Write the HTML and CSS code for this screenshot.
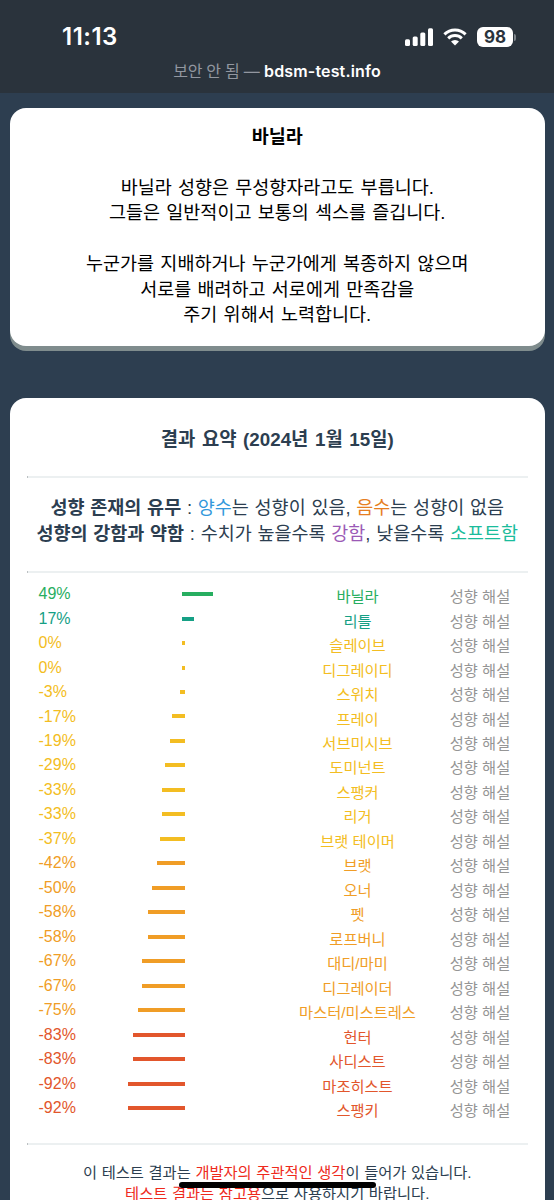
FILE: index.html
```html
<!DOCTYPE html>
<html lang="ko">
<head>
<meta charset="utf-8">
<title>결과 요약</title>
<link rel="stylesheet" href="styles.css">
</head>
<body>
<header class="top">
  <div class="status">
    <span class="clock">11:13</span>
    <div class="icons">
      <svg class="signal" width="28" height="18" viewBox="0 0 28 18"><rect x="0" y="11.3" width="5" height="6.7" rx="1.5"/><rect x="7.7" y="8.4" width="5" height="9.6" rx="1.5"/><rect x="15.3" y="4.5" width="5" height="13.5" rx="1.5"/><rect x="23" y="0.3" width="5" height="17.7" rx="1.5"/></svg>
      <svg class="wifi" width="24" height="18" viewBox="0 0 24 18"><path d="M1.4 6.4A15.2 15.2 0 0 1 22.6 6.4M5.2 10.3A9.8 9.8 0 0 1 18.8 10.3"/><path class="dot" d="M12 17.6L8 13.5A5.8 5.8 0 0 1 16 13.5Z"/></svg>
      <span class="battery">98</span><i class="cap"></i>
    </div>
  </div>
  <div class="url"><span class="insecure">보안 안 됨 —</span> <b>bdsm-test.info</b></div>
</header>
<main>
  <section class="card intro">
    <h2>바닐라</h2>
    <p>바닐라 성향은 무성향자라고도 부릅니다.<br>그들은 일반적이고 보통의 섹스를 즐깁니다.</p>
    <p>누군가를 지배하거나 누군가에게 복종하지 않으며<br>서로를 배려하고 서로에게 만족감을<br>주기 위해서 노력합니다.</p>
  </section>
  <section class="card result">
    <h2>결과 요약 (2024년 1월 15일)</h2>
    <hr>
    <p class="legend"><b>성향 존재의 유무</b> : <span class="blue">양수</span>는 성향이 있음, <span class="pumpkin">음수</span>는 성향이 없음<br><b>성향의 강함과 약함</b> : 수치가 높을수록 <span class="purple">강함</span>, 낮을수록 <span class="teal">소프트함</span></p>
    <hr>
    <ul class="scores">
      <li class="green"><span class="pct">49%</span><span class="track pos"><i style="--v:49"></i></span><span class="name">바닐라</span><span class="more">성향 해설</span></li>
      <li class="sea"><span class="pct">17%</span><span class="track pos"><i style="--v:17"></i></span><span class="name">리틀</span><span class="more">성향 해설</span></li>
      <li class="yellow"><span class="pct">0%</span><span class="track"><i style="--v:0"></i></span><span class="name">슬레이브</span><span class="more">성향 해설</span></li>
      <li class="yellow"><span class="pct">0%</span><span class="track"><i style="--v:0"></i></span><span class="name">디그레이디</span><span class="more">성향 해설</span></li>
      <li class="yellow"><span class="pct">-3%</span><span class="track"><i style="--v:3"></i></span><span class="name">스위치</span><span class="more">성향 해설</span></li>
      <li class="yellow"><span class="pct">-17%</span><span class="track"><i style="--v:17"></i></span><span class="name">프레이</span><span class="more">성향 해설</span></li>
      <li class="yellow"><span class="pct">-19%</span><span class="track"><i style="--v:19"></i></span><span class="name">서브미시브</span><span class="more">성향 해설</span></li>
      <li class="yellow"><span class="pct">-29%</span><span class="track"><i style="--v:29"></i></span><span class="name">도미넌트</span><span class="more">성향 해설</span></li>
      <li class="yellow"><span class="pct">-33%</span><span class="track"><i style="--v:33"></i></span><span class="name">스팽커</span><span class="more">성향 해설</span></li>
      <li class="yellow"><span class="pct">-33%</span><span class="track"><i style="--v:33"></i></span><span class="name">리거</span><span class="more">성향 해설</span></li>
      <li class="yellow"><span class="pct">-37%</span><span class="track"><i style="--v:37"></i></span><span class="name">브랫 테이머</span><span class="more">성향 해설</span></li>
      <li class="orange"><span class="pct">-42%</span><span class="track"><i style="--v:42"></i></span><span class="name">브랫</span><span class="more">성향 해설</span></li>
      <li class="orange"><span class="pct">-50%</span><span class="track"><i style="--v:50"></i></span><span class="name">오너</span><span class="more">성향 해설</span></li>
      <li class="orange"><span class="pct">-58%</span><span class="track"><i style="--v:58"></i></span><span class="name">펫</span><span class="more">성향 해설</span></li>
      <li class="orange"><span class="pct">-58%</span><span class="track"><i style="--v:58"></i></span><span class="name">로프버니</span><span class="more">성향 해설</span></li>
      <li class="orange"><span class="pct">-67%</span><span class="track"><i style="--v:67"></i></span><span class="name">대디/마미</span><span class="more">성향 해설</span></li>
      <li class="orange"><span class="pct">-67%</span><span class="track"><i style="--v:67"></i></span><span class="name">디그레이더</span><span class="more">성향 해설</span></li>
      <li class="orange"><span class="pct">-75%</span><span class="track"><i style="--v:75"></i></span><span class="name">마스터/미스트레스</span><span class="more">성향 해설</span></li>
      <li class="red"><span class="pct">-83%</span><span class="track"><i style="--v:83"></i></span><span class="name">헌터</span><span class="more">성향 해설</span></li>
      <li class="red"><span class="pct">-83%</span><span class="track"><i style="--v:83"></i></span><span class="name">사디스트</span><span class="more">성향 해설</span></li>
      <li class="red"><span class="pct">-92%</span><span class="track"><i style="--v:92"></i></span><span class="name">마조히스트</span><span class="more">성향 해설</span></li>
      <li class="red"><span class="pct">-92%</span><span class="track"><i style="--v:92"></i></span><span class="name">스팽키</span><span class="more">성향 해설</span></li>
    </ul>
    <hr>
    <p class="note">이 테스트 결과는 <em>개발자의 주관적인 생각</em>이 들어가 있습니다.<br><em>테스트 결과는 참고용</em>으로 사용하시기 바랍니다.</p>
  </section>
</main>
<div class="home-bar"></div>
</body>
</html>
```
FILE: styles.css
```css
* { box-sizing: border-box; }
html, body { height: 1200px; overflow: hidden; }
body {
  margin: 0;
  background: #2d3e50;
  font-family: "Liberation Sans", "Noto Sans CJK KR", sans-serif;
  white-space: nowrap;
}
.top { height: 93px; background: #2a333c; color: #fff; overflow: hidden; }
.status {
  display: flex;
  justify-content: space-between;
  align-items: center;
  height: 32px;
  margin-top: 21px;
  padding: 0 38px 0 62px;
}
.clock { font: 600 24px/32px Inter, sans-serif; letter-spacing: 0.5px; }
.icons { display: flex; align-items: center; }
.icons svg { fill: #fff; }
.signal { margin-right: 10px; }
.wifi path { fill: none; stroke: #fff; stroke-width: 3; }
.wifi .dot { fill: #fff; stroke: none; }
.battery {
  width: 36px;
  height: 20px;
  margin-left: 10px;
  border-radius: 6px;
  background: #fff;
  color: #2a333c;
  font: 700 17px/20px Inter, sans-serif;
  text-align: center;
}
.cap { width: 2px; height: 7px; margin-left: 1px; border-radius: 0 2px 2px 0; background: #7c8389; }
.url {
  margin-top: 6px;
  font: 16px/24px Inter, "Noto Sans CJK KR", sans-serif;
  text-align: center;
}
.insecure { color: #9297a0; letter-spacing: -0.25px; }
.url b { font-weight: 600; letter-spacing: 0.15px; }
.card { width: 535.5px; margin-left: 9.5px; border-radius: 16px; background: #fff; text-align: center; }
h2, p, ul { margin: 0; padding: 0; }
.intro {
  height: 238px;
  margin-top: 14.5px;
  padding-top: 16.6px;
  box-shadow: 0 5px 0 #7f8c8d;
  color: #000;
  font-size: 18.5px;
  line-height: 25.4px;
  word-spacing: 1.1px;
}
.intro h2 { font-size: 18.5px; line-height: 25.4px; }
.intro p { margin-top: 25.4px; }
.result { height: 830px; margin-top: 52.5px; padding: 28.5px 17px 0; color: #2c3e50; }
.result h2 { font-size: 18.8px; line-height: 26px; word-spacing: 1.4px; }
hr { height: 2px; margin: 0; border: 0; border-left: 1px solid #bcc0c2; background: #ecf0f1; }
.result h2 + hr { margin-top: 23.5px; }
.legend { margin: 17px -10px 25px; font-size: 18.5px; line-height: 25.6px; word-spacing: 0.6px; }
.blue { color: #3498db; }
.pumpkin { color: #e67e22; }
.purple { color: #9b59b6; }
.teal { color: #1abc9c; }
.scores { margin: 8px 0 23.9px 12px; list-style: none; font-size: 15.3px; }
.scores li {
  display: grid;
  grid-template-columns: 89px 57px 88px 170px 75px;
  align-items: center;
  height: 24.47px;
  line-height: 24.47px;
}
.pct { font-size: 16px; text-align: left; padding-bottom: 2px; }
.track { display: flex; justify-content: flex-end; padding-bottom: 2.6px; }
.track.pos { justify-content: flex-start; padding-left: 54px; }
.track i { flex: none; width: calc(3px + var(--v) * 0.586px); height: 4px; background: currentColor; }
.name { grid-column: 4; padding-top: 4px; }
.more { color: #959595; padding-top: 4px; }
.green { color: #27ae60; }
.sea { color: #16a085; }
.yellow { color: #f3bd22; }
.orange { color: #f09d26; }
.red { color: #e2562c; }
.note { margin-top: 16.5px; font-size: 15.3px; line-height: 21px; word-spacing: 0.4px; }
.note em { font-style: normal; color: #ee2a1c; }
.home-bar {
  position: absolute;
  left: 179px;
  top: 1182px;
  width: 197px;
  height: 6px;
  border-radius: 3px;
  background: #000;
}
```
